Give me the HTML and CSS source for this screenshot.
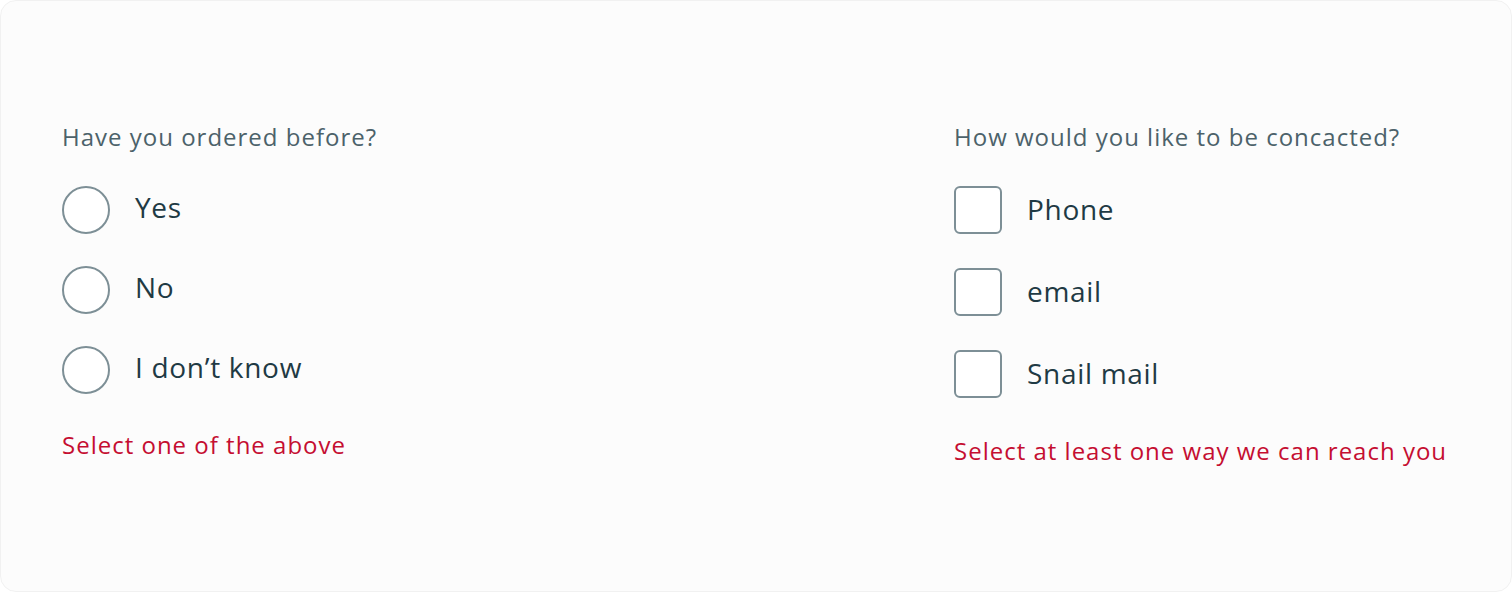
FILE: index.html
```html
<!DOCTYPE html>
<html lang="en">
<head>
    <meta charset="UTF-8">
    <meta name="viewport" content="width=device-width, initial-scale=1.0">
    <title>Radio &amp; Checkbox errors</title>
    <link rel="stylesheet" href="styles.css">
</head>
<body>
    <div class="card">
        <div class="field">
            <div class="field-label">Have you ordered before?</div>
            <div class="options options-radio">
                <label class="option">
                    <span class="radio"></span>
                    <span class="option-text">Yes</span>
                </label>
                <label class="option">
                    <span class="radio"></span>
                    <span class="option-text">No</span>
                </label>
                <label class="option">
                    <span class="radio"></span>
                    <span class="option-text">I don’t know</span>
                </label>
            </div>
            <div class="field-error">Select one of the above</div>
        </div>

        <div class="field">
            <div class="field-label">How would you like to be concacted?</div>
            <div class="options options-check">
                <label class="option">
                    <span class="checkbox"></span>
                    <span class="option-text">Phone</span>
                </label>
                <label class="option">
                    <span class="checkbox"></span>
                    <span class="option-text">email</span>
                </label>
                <label class="option">
                    <span class="checkbox"></span>
                    <span class="option-text">Snail mail</span>
                </label>
            </div>
            <div class="field-error field-error-check">Select at least one way we can reach you</div>
        </div>
    </div>
</body>
</html>
```

FILE: styles.css
```css
body {
    margin: 0;
    background: #ffffff;
    font-family: "Open Sans", "Noto Sans", sans-serif;
}

.card {
    box-sizing: border-box;
    height: 592px;
    background: #fcfcfc;
    border: 1px solid #f1f1f1;
    border-radius: 16px;
    padding: 120px 61px 0 61px;
    display: grid;
    grid-template-columns: 892px 1fr;
    align-items: start;
}

.field-label {
    font-size: 24px;
    line-height: 32px;
    letter-spacing: 1px;
    color: #4c626a;
    margin-bottom: 33px;
}

.options {
    display: flex;
    flex-direction: column;
    gap: 32px;
}

.options-check {
    gap: 34px;
}

.option {
    display: flex;
    align-items: center;
    gap: 25px;
    height: 48px;
    cursor: pointer;
}

.radio,
.checkbox {
    box-sizing: border-box;
    width: 48px;
    height: 48px;
    flex: none;
    border: 2px solid #7d8f96;
    background: #ffffff;
}

.radio {
    border-radius: 50%;
}

.checkbox {
    border-radius: 6px;
}

.option-text {
    font-size: 28px;
    line-height: 42px;
    letter-spacing: 0.7px;
    margin-bottom: 6px;
    color: #1f3a44;
}

.options-check .option-text {
    margin-bottom: 2px;
}

.field-error {
    margin-top: 35px;
    font-size: 24px;
    line-height: 32px;
    letter-spacing: 1px;
    color: #c50e31;
}

.field-error-check {
    margin-top: 37px;
}
```
